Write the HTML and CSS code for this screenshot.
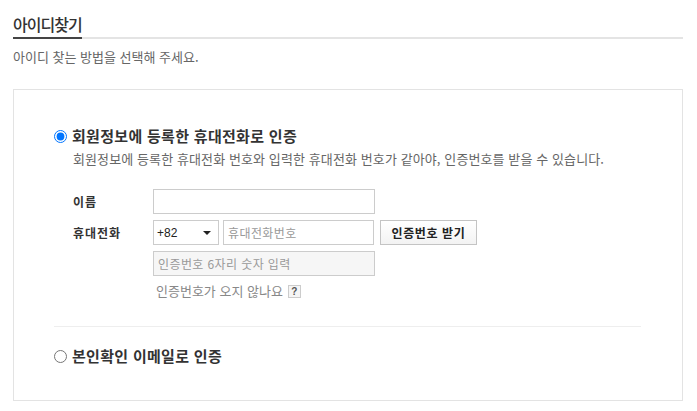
FILE: index.html
```
<!DOCTYPE html>
<html lang="ko">
<head>
<meta charset="utf-8">
<title>아이디찾기</title>
<link rel="stylesheet" href="styles.css">
</head>
<body>
<div class="page">
  <div class="title-wrap">
    <h2 class="title">아이디찾기</h2>
  </div>
  <p class="subtitle">아이디 찾는 방법을 선택해 주세요.</p>

  <div class="box">
    <div class="option">
      <label class="option-head">
        <input type="radio" name="method" class="radio" checked>
        <span class="option-title">회원정보에 등록한 휴대전화로 인증</span>
      </label>
      <p class="option-desc">회원정보에 등록한 휴대전화 번호와 입력한 휴대전화 번호가 같아야, 인증번호를 받을 수 있습니다.</p>

      <div class="form">
        <div class="row">
          <span class="label">이름</span>
          <input type="text" class="input input-wide">
        </div>
        <div class="row">
          <span class="label">휴대전화</span>
          <div class="select"><span>+82</span><span class="caret"></span></div>
          <input type="text" class="input input-phone" placeholder="휴대전화번호">
          <button type="button" class="btn">인증번호 받기</button>
        </div>
        <div class="row">
          <span class="label"></span>
          <input type="text" class="input input-wide input-disabled" placeholder="인증번호 6자리 숫자 입력" disabled>
        </div>
        <div class="help-row">
          <span class="label"></span>
          <span class="help">인증번호가 오지 않나요</span>
          <span class="qmark">?</span>
        </div>
      </div>
    </div>

    <div class="divider"></div>

    <div class="option option-last">
      <label class="option-head">
        <input type="radio" name="method" class="radio">
        <span class="option-title">본인확인 이메일로 인증</span>
      </label>
    </div>
  </div>
</div>
</body>
</html>
```

FILE: styles.css
```
* { box-sizing: border-box; }

html, body {
  margin: 0;
  padding: 0;
  background: #fff;
}

body {
  font-family: "Noto Sans CJK KR", "Noto Sans", sans-serif;
  color: #333;
}

.page {
  width: 670px;
  margin-left: 13px;
}

.title-wrap {
  border-bottom: 2px solid #e4e4e4;
  padding-top: 12px;
}

.title {
  display: inline-block;
  margin: 0 0 -2px 0;
  padding: 0 0 3px 0;
  font-size: 16px;
  line-height: 20px;
  font-weight: 500;
  letter-spacing: -1px;
  color: #333;
  border-bottom: 2px solid #444;
}

.subtitle {
  margin: 10px 0 0 0;
  font-size: 13px;
  line-height: 16px;
  color: #666;
}

.box {
  margin-top: 24px;
  border: 1px solid #e3e3e3;
  padding: 36px 41px 34px 40px;
}

.option-head {
  display: flex;
  align-items: center;
  height: 20px;
}

.radio {
  width: 13px;
  height: 13px;
  margin: 0 5px 0 0;
  flex: none;
}

.option-title {
  font-size: 15px;
  line-height: 20px;
  font-weight: 700;
  letter-spacing: 0.3px;
  color: #333;
}

.option-desc {
  margin: 4px 0 0 19px;
  font-size: 13px;
  line-height: 18px;
  letter-spacing: 0.1px;
  color: #666;
}

.form {
  margin: 21px 0 0 19px;
  display: flex;
  flex-direction: column;
  gap: 6px;
}

.row {
  display: flex;
  align-items: center;
  gap: 4px;
}

.label {
  width: 76px;
  flex: none;
  font-size: 12px;
  font-weight: 700;
  color: #333;
  letter-spacing: 1px;
}

.input {
  height: 25px;
  border: 1px solid #ccc;
  padding: 0 4px;
  font-family: inherit;
  font-size: 12px;
  letter-spacing: 0.4px;
  color: #333;
  background: #fff;
  outline: none;
}

.input::placeholder { color: #999; }

.input-wide { width: 222px; }
.input-phone { width: 151px; }

.input-disabled {
  background: #f6f6f6;
}

.select {
  width: 66px;
  height: 25px;
  border: 1px solid #ccc;
  display: flex;
  align-items: center;
  justify-content: space-between;
  padding: 0 7px 0 3px;
  font-family: "Liberation Sans", Arial, sans-serif;
  font-size: 12px;
  color: #222;
}

.caret {
  width: 0;
  height: 0;
  border-left: 4px solid transparent;
  border-right: 4px solid transparent;
  border-top: 4px solid #222;
}

.btn {
  margin-left: 2px;
  width: 97px;
  height: 25px;
  border: 1px solid #c4c4c4;
  background: linear-gradient(#fff, #f3f3f3);
  font-family: inherit;
  font-size: 12px;
  font-weight: 700;
  letter-spacing: 0.6px;
  color: #222;
  padding: 0;
}

.help-row {
  display: flex;
  align-items: center;
  gap: 5px;
  margin-top: 1px;
}

.help {
  font-size: 13px;
  line-height: 16px;
  color: #888;
  margin-left: 2px;
}

.qmark {
  width: 13px;
  height: 13px;
  border: 1px solid #ccc;
  background: #f5f5f5;
  font-family: "Liberation Sans", Arial, sans-serif;
  font-size: 10px;
  font-weight: 700;
  line-height: 11px;
  text-align: center;
  color: #555;
}

.divider {
  height: 1px;
  background: #eee;
  margin: 27px 0 19px 0;
}
```
